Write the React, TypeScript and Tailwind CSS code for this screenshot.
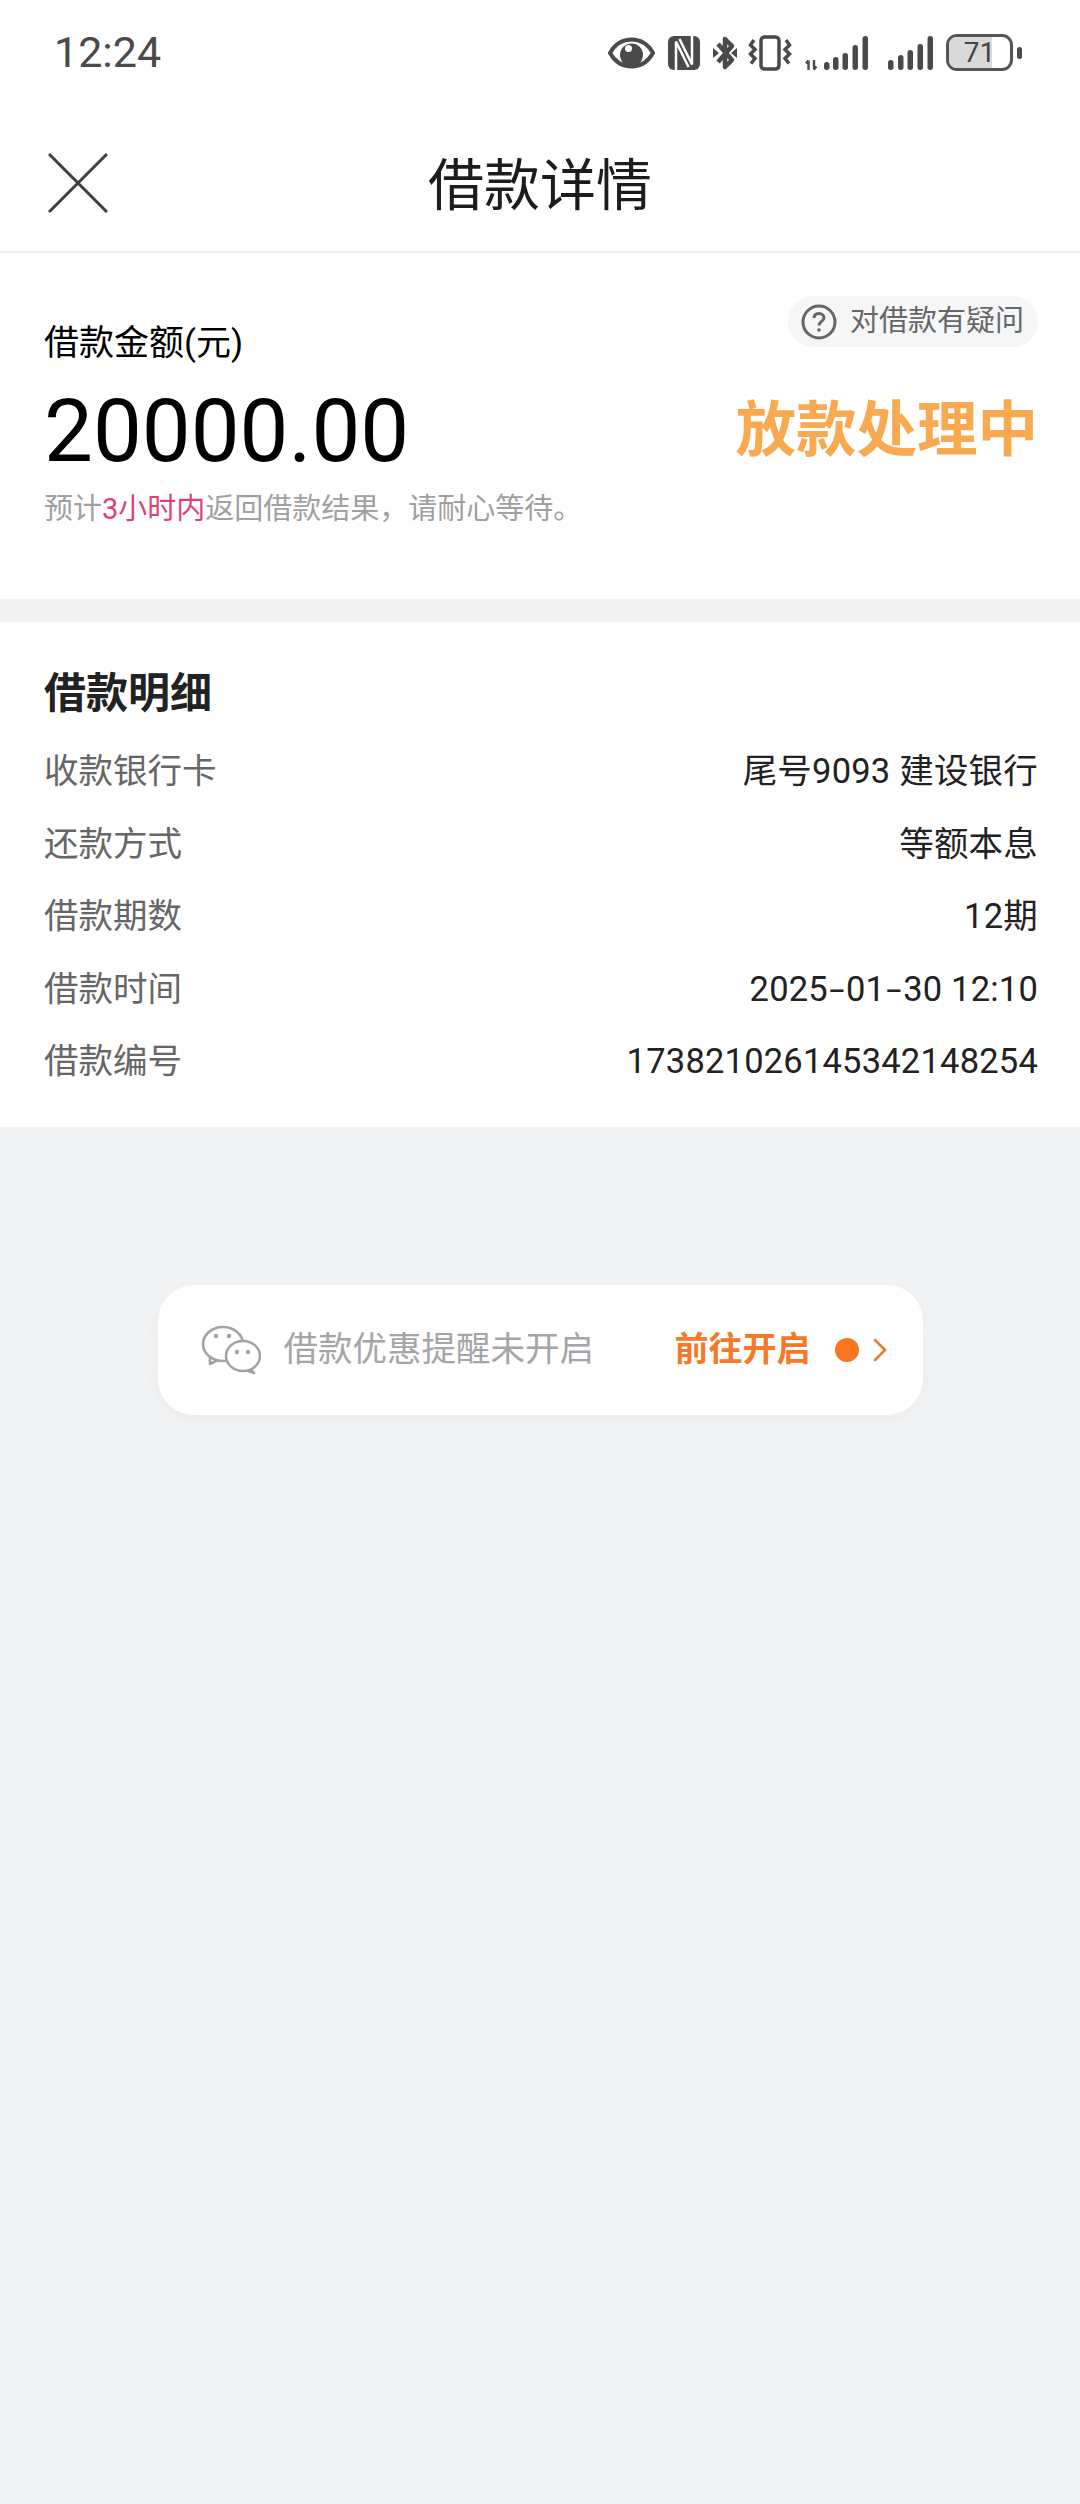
import type { ReactNode } from 'react'
import { ChevronRight } from 'lucide-react'

const fontStack = 'font-[Roboto,"Noto_Sans_CJK_SC",sans-serif]'

function Dash() {
  return <span className="inline-block w-[18px] scale-x-[1.6] text-center">-</span>
}

const details: { label: string; value: ReactNode }[] = [
  { label: '收款银行卡', value: '尾号9093 建设银行' },
  { label: '还款方式', value: '等额本息' },
  { label: '借款期数', value: '12期' },
  {
    label: '借款时间',
    value: (
      <>
        2025<Dash />01<Dash />30 12:10
      </>
    ),
  },
  { label: '借款编号', value: '173821026145342148254' },
]

function StatusIcons() {
  return (
    <div className="flex items-center text-[#4a4a4a]">
      {/* eye */}
      <svg width="47" height="32" viewBox="0 0 47 32" fill="none">
        <path d="M2 16C7 7 14 2.500 23.500 2.500S40 7 45 16C40 25 33 29.500 23.500 29.500S7 25 2 16Z" stroke="#4a4a4a" strokeWidth="4" />
        <circle cx="23.500" cy="18" r="11.500" fill="#4a4a4a" />
        <circle cx="20.500" cy="11.500" r="3.500" fill="#fff" />
      </svg>
      {/* nfc */}
      <svg width="32" height="34" viewBox="0 0 32 34" className="ml-[13px]">
        <rect width="32" height="34" rx="6" fill="#4a4a4a" />
        <path d="M8 34V5.500L20.500 31" fill="none" stroke="#fff" strokeWidth="2.500" />
        <path d="M24 0V28.500L11.500 3" fill="none" stroke="#fff" strokeWidth="2.500" />
      </svg>
      {/* bluetooth */}
      <svg width="24" height="36" viewBox="0 0 24 36" fill="none" className="ml-[13px]">
        <path d="M5 9L19 25L12 32V4L19 11L5 27" stroke="#4a4a4a" strokeWidth="4.500" strokeLinejoin="round" />
        <path d="M0 13L6 18L0 23ZM24 13L18 18L24 23Z" fill="#4a4a4a" />
      </svg>
      {/* vibrate */}
      <svg width="44" height="36" viewBox="0 0 44 36" fill="none" className="ml-[11px]">
        <rect x="13" y="2" width="18" height="32" rx="3.500" stroke="#4a4a4a" strokeWidth="3.500" />
        <path d="M6 5L2.500 10L7 14.500L2.500 19L7 23.500L3 28.500" stroke="#4a4a4a" strokeWidth="3.500" />
        <path d="M38 5L41.500 10L37 14.500L41.500 19L37 23.500L41 28.500" stroke="#4a4a4a" strokeWidth="3.500" />
      </svg>
      {/* signal 1 */}
      <svg width="63" height="36" viewBox="0 0 63 36" className="ml-[13px]">
        <path d="M3.500 35V25.500M1 28.500L3.500 25.500M9 25V34.500M11.500 31.500L9 34.500" fill="none" stroke="#4a4a4a" strokeWidth="2.400" />
        <rect x="19" y="27" width="5.500" height="8" rx="2.700" fill="#4a4a4a" />
        <rect x="28" y="22" width="5.500" height="13" rx="2.700" fill="#4a4a4a" />
        <rect x="37.500" y="18" width="5.500" height="17" rx="2.700" fill="#4a4a4a" />
        <rect x="47.500" y="10" width="5.500" height="25" rx="2.700" fill="#4a4a4a" />
        <rect x="57.500" y="1" width="5.500" height="34" rx="2.700" fill="#4a4a4a" />
      </svg>
      {/* signal 2 */}
      <svg width="45" height="36" viewBox="0 0 45 36" className="ml-[20px]">
        <rect x="0" y="25" width="5.500" height="10" rx="2.700" fill="#4a4a4a" />
        <rect x="10" y="20" width="5.500" height="15" rx="2.700" fill="#4a4a4a" />
        <rect x="19.500" y="15" width="5.500" height="20" rx="2.700" fill="#4a4a4a" />
        <rect x="29.500" y="9" width="5.500" height="26" rx="2.700" fill="#4a4a4a" />
        <rect x="39.500" y="1" width="5.500" height="34" rx="2.700" fill="#4a4a4a" />
      </svg>
      {/* battery */}
      <div className="relative ml-[13px] flex h-[37px] w-[67px] items-center justify-center overflow-hidden rounded-[11px] border-[3px] border-[#555]">
        <div className="absolute inset-y-0 left-0 w-[71%] bg-[#d9d9d9]" />
        <span className="relative text-[28px] leading-none text-[#444]">71</span>
      </div>
      <div className="ml-[4px] h-[12px] w-[5px] rounded-full bg-[#4a4a4a]" />
    </div>
  )
}

function WechatIcon() {
  return (
    <svg width="60" height="50" viewBox="0 0 60 50" fill="none" stroke="#a3a3a3" strokeWidth="2.600">
      <path d="M9 32L9 39L17 35" strokeLinejoin="round" fill="#fff" />
      <ellipse cx="22" cy="19" rx="20" ry="17" fill="#fff" />
      <path d="M48 42L53 48L44 45" strokeLinejoin="round" fill="#fff" />
      <ellipse cx="42" cy="31" rx="17" ry="15" fill="#fff" />
      <circle cx="15" cy="11" r="2.200" fill="#a3a3a3" stroke="none" />
      <circle cx="28" cy="11" r="2.200" fill="#a3a3a3" stroke="none" />
      <circle cx="36" cy="27" r="2.200" fill="#a3a3a3" stroke="none" />
      <circle cx="47" cy="27" r="2.200" fill="#a3a3a3" stroke="none" />
    </svg>
  )
}

export default function App() {
  return (
    <div className={`min-h-[2504px] w-[1080px] bg-[#f2f3f5] ${fontStack}`}>
      <div className="bg-white">
        <div className="flex h-[105px] items-center justify-between pl-[54px] pr-[58px]">
          <span className="text-[43px] leading-none text-[#4a4a4a]">12:24</span>
          <StatusIcons />
        </div>
        <div className="grid h-[148px] grid-cols-[1fr_auto_1fr] items-center border-b-2 border-[#ececee] pt-[10px]">
          <svg width="60" height="60" viewBox="0 0 60 60" fill="none" stroke="#3f3f3f" strokeWidth="3" className="ml-[48px]">
            <path d="M1 1L59 59M59 1L1 59" />
          </svg>
          <h1 className="pt-[5px] text-[56px] font-normal leading-none text-[#1c1c1c]">借款详情</h1>
        </div>
      </div>

      <section className="bg-white pb-[70px] pl-[44px] pr-[42px] pt-[43px]">
        <div className="flex items-start justify-between">
          <p className="mt-[26px] text-[35px] leading-[44px] text-black">借款金额(元)</p>
          <div className="flex h-[51px] items-center gap-[13px] rounded-full bg-[#f5f6f8] pl-[13px] pr-[14px]">
            <svg width="36" height="36" viewBox="0 0 36 36" fill="none" stroke="#666" strokeWidth="3">
              <circle cx="18" cy="18" r="16" />
              <path d="M13 14C13 11 15 9.500 18 9.500S23 11.500 23 14C23 17 18 17.500 18 21.500" />
              <circle cx="18" cy="26" r="1.800" fill="#666" stroke="none" />
            </svg>
            <span className="text-[29px] leading-none text-[#666]">对借款有疑问</span>
          </div>
        </div>
        <div className="mt-[15px] flex h-[100px] items-center justify-between">
          <span className="text-[87px] leading-none text-black">20000.00</span>
          <span className="text-[60.500px] font-bold leading-none text-[#f9a94f]">放款处理中</span>
        </div>
        <p className="mt-[8px] text-[29px] leading-[40px] text-[#a0a0a0]">
          预计<span className="text-[#e0407a]">3小时内</span>返回借款结果，请耐心等待。
        </p>
      </section>

      <section className="mt-[23px] bg-white pb-[28px] pl-[44px] pr-[42px] pt-[42px]">
        <h2 className="text-[42px] font-bold leading-[60px] text-[#222]">借款明细</h2>
        <div className="mt-[12px]">
          {details.map((row) => (
            <div key={row.label} className="flex h-[72.500px] items-center justify-between">
              <span className="text-[34.500px] text-[#666]">{row.label}</span>
              <span className="text-[34.500px] tracking-[0.2px] text-[#222]">{row.value}</span>
            </div>
          ))}
        </div>
      </section>

      <div className="mx-auto mt-[158px] flex h-[130px] w-[765px] items-center rounded-[36px] bg-white pl-[43px] pr-[23px] shadow-[0_4px_20px_rgba(0,0,0,0.04)]">
        <WechatIcon />
        <span className="ml-[23px] flex-1 text-[34.500px] text-[#a3a5a8]">借款优惠提醒未开启</span>
        <span className="text-[34px] font-semibold text-[#f47a2a]">前往开启</span>
        <div className="ml-[24px] h-[24px] w-[24px] rounded-full bg-[#f8761f]" />
        <ChevronRight className="ml-[1px] h-[40px] w-[40px] text-[#f47a2a]" strokeWidth={1.5} />
      </div>
    </div>
  )
}
